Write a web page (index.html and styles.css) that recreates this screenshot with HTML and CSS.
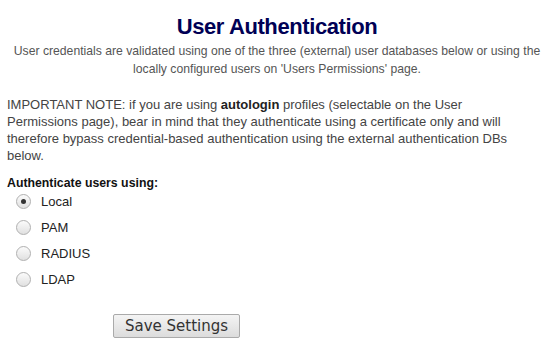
FILE: index.html
```html
<!DOCTYPE html>
<html>
<head>
<meta charset="utf-8">
<link rel="stylesheet" href="styles.css">
</head>
<body>
<div class="page">
  <h1 class="title">User Authentication</h1>
  <p class="intro">User credentials are validated using one of the three (external) user databases below or using the locally configured users on 'Users Permissions' page.</p>
  <p class="note">IMPORTANT NOTE: if you are using <b>autologin</b> profiles (selectable on the User Permissions page), bear in mind that they authenticate using a certificate only and will therefore bypass credential-based authentication using the external authentication DBs below.</p>
  <div class="group-label">Authenticate users using:</div>
  <div class="options">
    <label class="opt"><input type="radio" name="auth" checked><span>Local</span></label>
    <label class="opt"><input type="radio" name="auth"><span>PAM</span></label>
    <label class="opt"><input type="radio" name="auth"><span>RADIUS</span></label>
    <label class="opt"><input type="radio" name="auth"><span>LDAP</span></label>
  </div>
  <div class="actions">
    <button class="btn">Save Settings</button>
  </div>
</div>
</body>
</html>
```
FILE: styles.css
```css
html, body {
  margin: 0;
  padding: 0;
  background: #fff;
}
.page {
  padding: 12px 7px 0 7px;
  font-family: "Liberation Sans", Arial, sans-serif;
  color: #333;
}
.title {
  margin: 0;
  text-align: center;
  font-size: 22px;
  line-height: 30px;
  font-weight: bold;
  color: #000055;
  letter-spacing: -0.4px;
}
.intro {
  margin: 0;
  text-align: center;
  font-size: 12.2px;
  line-height: 18px;
  color: #555;
}
.note {
  margin: 18px 0 0 0;
  max-width: 515px;
  font-size: 13px;
  line-height: 17px;
  color: #444;
}
.note b {
  color: #222;
}
.group-label {
  margin-top: 11px;
  font-size: 12.3px;
  line-height: 17px;
  font-weight: bold;
  color: #111;
}
.options {
  display: flex;
  flex-direction: column;
  margin-top: -4px;
}
.opt {
  display: flex;
  align-items: center;
  height: 26px;
  font-size: 13px;
  color: #222;
}
.opt input {
  appearance: none;
  -webkit-appearance: none;
  width: 15px;
  height: 15px;
  margin: 0 10px 0 9px;
  border: 1px solid #b0b0b0;
  border-radius: 50%;
  background: linear-gradient(#fbfbfb, #e0e0e0);
  box-sizing: border-box;
  position: relative;
}
.opt input:checked::after {
  content: "";
  position: absolute;
  left: 4px;
  top: 4px;
  width: 5px;
  height: 5px;
  border-radius: 50%;
  background: #333;
}
.actions {
  display: flex;
  padding-left: 106px;
  margin-top: 22px;
}
.btn {
  width: 127px;
  height: 24px;
  font-family: "DejaVu Sans", sans-serif;
  font-size: 15px;
  color: #333;
  border: 1px solid #aaa;
  border-radius: 2px;
  background: linear-gradient(#f4f4f4, #dcdcdc);
  padding: 0;
}
```
